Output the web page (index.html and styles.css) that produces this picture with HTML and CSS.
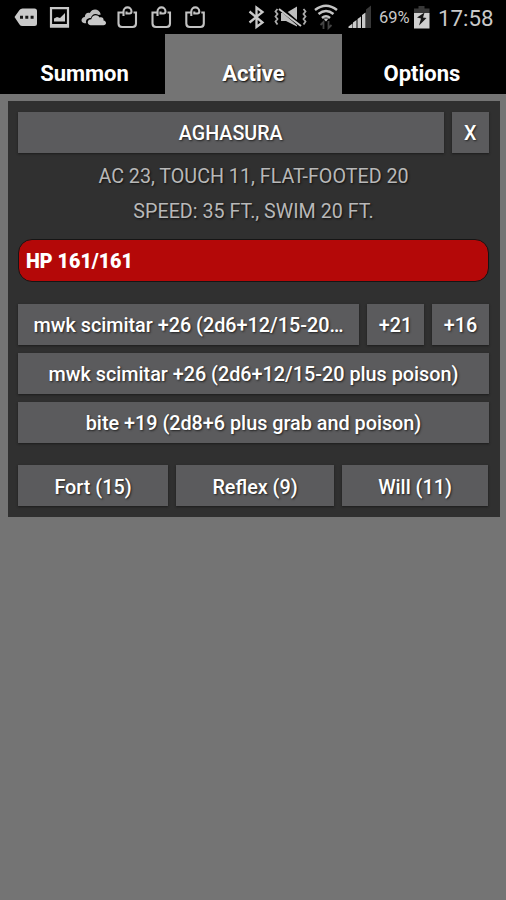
FILE: index.html
```html
<!DOCTYPE html>
<html lang="en">
<head>
<meta charset="utf-8">
<title>Summoner</title>
<link rel="stylesheet" href="styles.css">
</head>
<body>
<header class="status">
  <svg class="status-icons" viewBox="0 0 220 34" width="220" height="34" aria-hidden="true">
    <path fill="#c9c9c9" d="M14.500 17l5-7q1-1.500 3-1.500h12q2.500 0 2.500 2.500v12.500q0 2.500-2.500 2.500h-12q-2 0-3-1.500z"/>
    <path fill="#151515" d="M20 15.700h3v3h-3zM25.300 15.700h3v3h-3zM30.600 15.700h3v3h-3z"/>
    <path fill="none" stroke="#c9c9c9" stroke-width="2.200" d="M51 8.100h17v18.300H51z"/>
    <path fill="#c9c9c9" d="M50 24h19v3.500H50zM54 21.500v-3l3-1.500 3 1 5-5v8.500z"/>
    <path fill="#bdbdbd" d="M84.500 23.300c-4.500-.8-3.500-6 .3-6.300 0-3.500 3-5 5-4 2.500-5 9.500-4.500 11 1.500l-2 .5c-4-2.500-7-.5-8 3-4 0-5.500 2.500-4.500 5.300z"/>
    <path fill="#c9c9c9" d="M90.500 25.300c-4-.8-3.500-6 .8-6 .5-4.800 6.500-5.500 8.200-1.800 3-.8 4.500 1 4 3 3.500.5 3.200 4.800 0 4.800z"/>
    <g fill="none" stroke="#c2c2c2" stroke-width="2.100">
      <path d="M122.500 12.500h-4v11q0 3.500 3.500 3.500h10.500q3.500 0 3.500-3.500v-11h-2.500M123.500 16v-4.500c0-5.500 8-5.500 8 0q0 2-2 2h-3v-2"/>
      <path d="M156.500 12.500h-4v11q0 3.500 3.500 3.500h10.500q3.500 0 3.500-3.500v-11h-2.500M157.500 16v-4.500c0-5.500 8-5.500 8 0q0 2-2 2h-3v-2"/>
      <path d="M190.300 12.500h-4v11q0 3.500 3.500 3.500h10.500q3.500 0 3.500-3.500v-11h-2.500M191.300 16v-4.500c0-5.500 8-5.500 8 0q0 2-2 2h-3v-2"/>
    </g>
  </svg>
  <div class="status-right">
    <svg viewBox="240 0 136 34" width="136" height="34" aria-hidden="true">
      <path fill="none" stroke="#c9c9c9" stroke-width="2.300" d="M249.500 11.500l13 11-6 4.500V7.500l6 4.500-13 10.500"/>
      <path fill="none" stroke="#aaa" stroke-width="1.800" d="M277.500 9l-2 2.500 2 2.500-2 2.500 2 2.500-2 2.500 2 3M303.500 9l2 2.500-2 2.500 2 2.500-2 2.500 2 2.500-2 3"/>
      <path fill="#bdbdbd" d="M281 13h5l11-6.500v20L286 21h-5z"/>
      <path stroke="#000" stroke-width="4" d="M280 8l21 18"/>
      <path stroke="#c9c9c9" stroke-width="2" d="M279 9l22 17"/>
      <path fill="none" stroke="#c4c4c4" stroke-width="2.500" d="M315 10q11-8.500 22 0M318.500 14q7.500-6 15 0M322 18q4-3.500 8 0"/>
      <path fill="#c4c4c4" d="M323.500 18.500h5l-2.500 3z"/>
      <path fill="none" stroke="#444" stroke-width="1.800" d="M323.500 29v-7l-3 3M328.500 21v7l3-3"/>
      <path fill="#393939" d="M366 9.500l5-4V28h-5z"/>
      <path fill="#c9c9c9" d="M348.500 28v-1.500l4-3V28zM353 28v-5.500l3.500-2.500v8zM357.500 28v-9l3.500-2.500V28zM362 28V15l3.500-2.500V28z"/>
    </svg>
    <span class="percent">69%</span>
    <svg viewBox="413 0 18 34" width="18" height="34" aria-hidden="true">
      <path fill="#383838" d="M418.500 6h6v2.500h5v5h-15.500v-5h4.500z"/>
      <path fill="#d0d0d0" d="M414 13h15.500v15.500H414z"/>
      <path fill="#171717" d="M424.500 12.500l-7.500 5 4 1-2 7 7.500-7.500-3.500-.5z"/>
    </svg>
    <time class="clock">17:58</time>
  </div>
</header>
<nav class="tabs">
  <a class="tab">Summon</a>
  <a class="tab active">Active</a>
  <a class="tab">Options</a>
</nav>
<main class="card">
  <div class="row title-row">
    <button class="btn name">AGHASURA</button>
    <button class="btn">X</button>
  </div>
  <p class="stat">AC 23, TOUCH 11, FLAT-FOOTED 20</p>
  <p class="stat">SPEED: 35 FT., SWIM 20 FT.</p>
  <div class="hp">HP 161/161</div>
  <div class="attacks">
    <div class="row multi">
      <button class="btn">mwk scimitar +26 (2d6+12/15-20…</button>
      <button class="btn">+21</button>
      <button class="btn">+16</button>
    </div>
    <button class="btn">mwk scimitar +26 (2d6+12/15-20 plus poison)</button>
    <button class="btn">bite +19 (2d8+6 plus grab and poison)</button>
  </div>
  <div class="row saves">
    <button class="btn">Fort (15)</button>
    <button class="btn">Reflex (9)</button>
    <button class="btn">Will (11)</button>
  </div>
</main>
</body>
</html>
```
FILE: styles.css
```css
* { box-sizing: border-box; }
body {
  margin: 0;
  min-height: 900px;
  background: #747474;
  font-family: Roboto, "Liberation Sans", sans-serif;
  color: #fff;
}
.status {
  display: flex;
  justify-content: space-between;
  height: 34px;
  background: #000;
}
.status-right {
  display: flex;
  align-items: flex-start;
  width: 266px;
  color: #c9c9c9;
}
.percent {
  width: 37px;
  padding-left: 3px;
  font-size: 16.500px;
  line-height: 36px;
}
.clock {
  margin-left: 7px;
  font-size: 22.300px;
  line-height: 37px;
}
.tabs {
  display: grid;
  grid-template-columns: 165px 177px 1fr;
  height: 59.500px;
}
.tab {
  background: #000;
  font-size: 22px;
  font-weight: 700;
  line-height: 26px;
  padding-top: 27px;
  text-align: center;
  text-shadow: 1px 1px 2px #000;
}
.tab:first-child { padding-left: 4px; }
.tab:last-child { padding-right: 4px; }
.tab.active { background: #747474; }
.card {
  margin: 7.500px 6.500px 0 8px;
  padding: 11px 10.500px 11px 10px;
  height: 416px;
  background: #303030;
}
.row { display: grid; column-gap: 8px; }
.title-row { grid-template-columns: 1fr 37.500px; margin-bottom: 5.500px; }
.multi { grid-template-columns: 1fr 57px 57px; }
.saves { grid-template-columns: 150px 158px 146px; margin-top: 21.500px; }
.btn {
  height: 41.500px;
  padding: 0;
  border: 0;
  background: #5b5b5d;
  box-shadow: 0 1px 2px #1c1c1c;
  color: #fff;
  font: 500 19.800px/43px Roboto, "Liberation Sans", sans-serif;
  text-align: center;
  text-shadow: 1px 1px 2px #222;
  white-space: nowrap;
}
.title-row .btn { height: 41px; font-size: 19.700px; }
.saves .btn { padding-top: 1px; }
.stat {
  margin: 0;
  height: 35px;
  color: #b8b8b8;
  font-size: 19.700px;
  line-height: 35px;
  text-align: center;
  text-shadow: 1px 1px 2px #111;
}
.hp {
  height: 43px;
  margin: 10px 0 22px;
  padding-left: 7px;
  border: 1.500px solid #151515;
  border-radius: 14px;
  background: #b40808;
  font-size: 19.700px;
  font-weight: 900;
  line-height: 43px;
}
.attacks { display: grid; row-gap: 7.700px; }
```
